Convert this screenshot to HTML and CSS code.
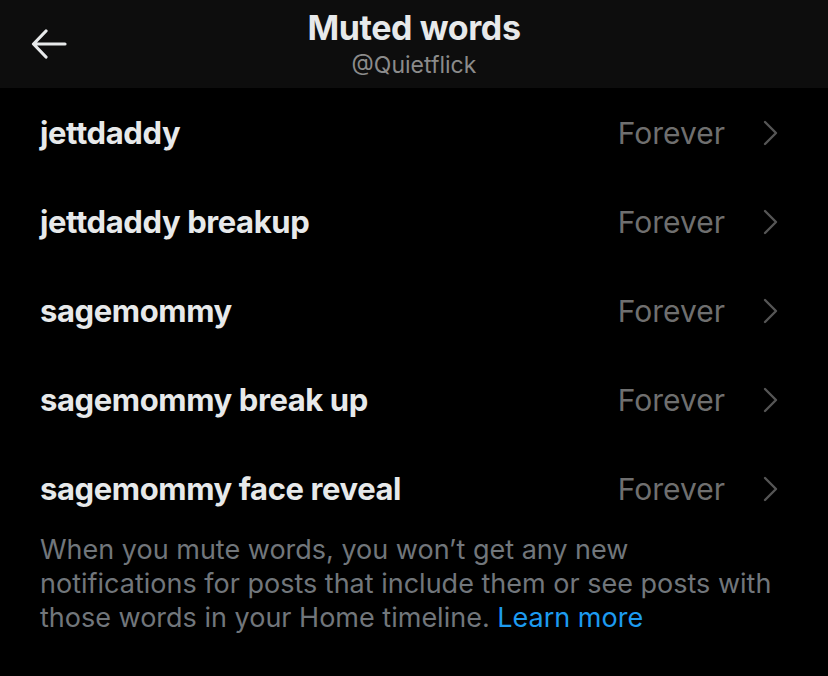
FILE: index.html
```html
<!DOCTYPE html>
<html lang="en">
<head>
  <meta charset="UTF-8" />
  <title>Muted words</title>
  <link rel="stylesheet" href="styles.css">
</head>
<body>
  <div class="topbar">
    <a class="back" href="#">
      <svg width="36" height="30" viewBox="0 0 36 30"><path d="M34 15H3M15 2L2.5 15 15 28" fill="none" stroke="#e7e9ea" stroke-width="3.2" stroke-linecap="round" stroke-linejoin="round"/></svg>
    </a>
    <div class="title-block">
      <div class="title">Muted words</div>
      <div class="handle">@Quietflick</div>
    </div>
  </div>

  <div class="word-list">
    <div class="word-row"><span class="word">jettdaddy</span><span class="dur">Forever</span><svg class="chev" width="16" height="26" viewBox="0 0 16 26"><path d="M3 2l11 11L3 24" fill="none" stroke="#555" stroke-width="2.4" stroke-linecap="round" stroke-linejoin="round"/></svg></div>
    <div class="word-row"><span class="word">jettdaddy breakup</span><span class="dur">Forever</span><svg class="chev" width="16" height="26" viewBox="0 0 16 26"><path d="M3 2l11 11L3 24" fill="none" stroke="#555" stroke-width="2.4" stroke-linecap="round" stroke-linejoin="round"/></svg></div>
    <div class="word-row"><span class="word">sagemommy</span><span class="dur">Forever</span><svg class="chev" width="16" height="26" viewBox="0 0 16 26"><path d="M3 2l11 11L3 24" fill="none" stroke="#555" stroke-width="2.4" stroke-linecap="round" stroke-linejoin="round"/></svg></div>
    <div class="word-row"><span class="word">sagemommy break up</span><span class="dur">Forever</span><svg class="chev" width="16" height="26" viewBox="0 0 16 26"><path d="M3 2l11 11L3 24" fill="none" stroke="#555" stroke-width="2.4" stroke-linecap="round" stroke-linejoin="round"/></svg></div>
    <div class="word-row"><span class="word">sagemommy face reveal</span><span class="dur">Forever</span><svg class="chev" width="16" height="26" viewBox="0 0 16 26"><path d="M3 2l11 11L3 24" fill="none" stroke="#555" stroke-width="2.4" stroke-linecap="round" stroke-linejoin="round"/></svg></div>
  </div>

  <p class="note">When you mute words, you won’t get any new notifications for posts that include them or see posts with those words in your Home timeline. <a href="#">Learn more</a></p>
</body>
</html>
```

FILE: styles.css
```css
* { box-sizing: border-box; }
body {
  margin: 0;
  background: #000;
  color: #e7e9ea;
  font-family: Inter, "Noto Sans", sans-serif;
}
.topbar {
  height: 88px; background: #0d0d0d;
  display: flex; align-items: center; justify-content: center;
  position: relative;
}
.back { position: absolute; left: 31px; top: 29px; line-height: 0; }
.title-block { text-align: center; margin-top: 0; }
.title { font-size: 34px; font-weight: 700; letter-spacing: -0.4px; line-height: 40px; }
.handle { font-size: 23px; color: #8b8b8b; line-height: 30px; margin-top: 2px; }
.word-row {
  height: 89px; display: flex; align-items: center;
  padding: 0 50px 0 40px;
}
.word { font-size: 31px; font-weight: 700; flex: 1; letter-spacing: -0.4px; }
.dur { font-size: 30px; color: #6f6f6f; margin-right: 37px; }
.chev { display: block; }
.note {
  margin: 0; padding: 0 42px 0 40px;
  font-size: 27px; line-height: 34px; color: #71767b;
}
.note a { color: #1d9bf0; text-decoration: none; }
```
